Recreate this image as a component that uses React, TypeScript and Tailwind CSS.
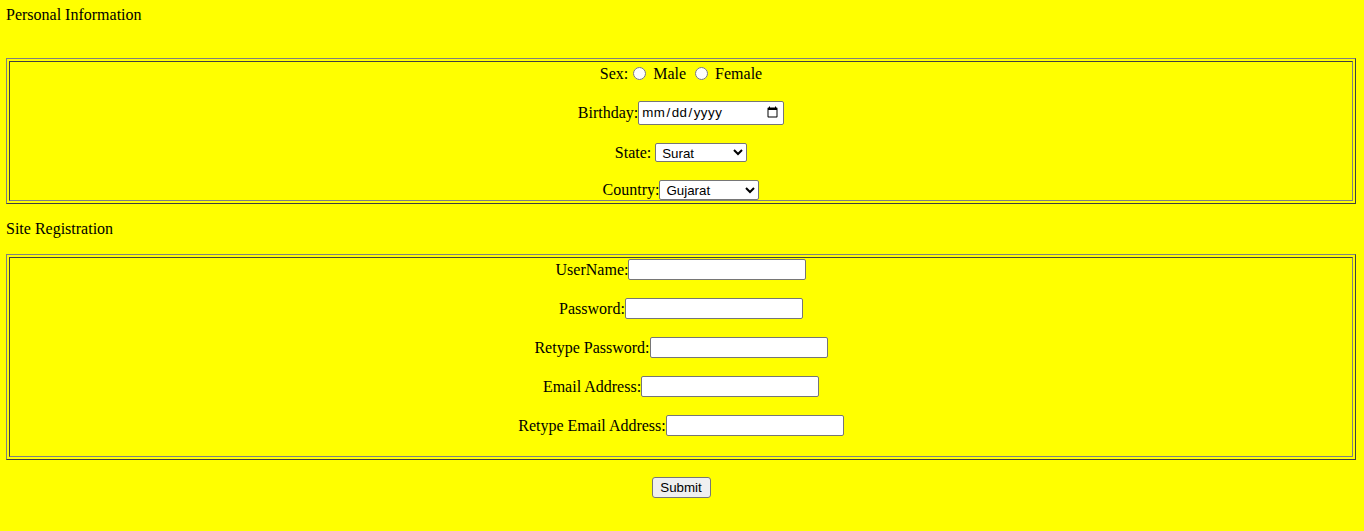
import React from 'react';

const field =
  "align-top border border-[#767676] rounded-[2px] bg-white px-[2px] py-[1px] font-['Liberation_Sans',Arial,sans-serif] text-[13.33px] text-black";

const Row: React.FC<{ h: number; mt: number; lh?: number; children: React.ReactNode }> = ({ h, mt, lh, children }) => (
  <div className="text-center whitespace-nowrap" style={{ height: h, lineHeight: `${lh ?? h}px`, marginTop: mt }}>
    {children}
  </div>
);

const Box: React.FC<{ h: number; children: React.ReactNode }> = ({ h, children }) => (
  <div className="ml-[6px] w-[1350px] border border-t-[#808080] border-l-[#808080] border-r-[#404040] border-b-[#404040] p-[2px]">
    <div
      className="border border-t-[#404040] border-l-[#404040] border-r-[#808080] border-b-[#808080]"
      style={{ height: h + 2 }}
    >
      {children}
    </div>
  </div>
);

export default function App() {
  return (
    <div className="w-full h-[531px] bg-[#ffff00] text-black font-['Liberation_Serif','Times_New_Roman',serif] text-[16px]">
      <div className="pt-[6px] pl-[6px] h-[24px] leading-[18px]">Personal Information</div>

      <div className="mt-[34px]">
        <Box h={138}>
          <Row h={22} mt={0} lh={24}>
            Sex:
            <input type="radio" name="sex" className="align-middle ml-[5px] mr-[3px] -mt-[3px]" /> Male{' '}
            <input type="radio" name="sex" className="align-middle ml-[5px] mr-[3px] -mt-[3px]" /> Female
          </Row>
          <Row h={24} mt={17}>
            Birthday:
            <input type="date" className={`${field} w-[146px] h-[24px] tracking-[0.5px]`} />
          </Row>
          <Row h={19} mt={18}>
            State:{' '}
            <select className={`${field} w-[92px] h-[19px] py-0`} defaultValue="Surat">
              <option>Surat</option>
              <option>Ahmedabad</option>
            </select>
          </Row>
          <Row h={20} mt={18}>
            Country:
            <select className={`${field} w-[100px] h-[20px] py-0`} defaultValue="Gujarat">
              <option>Gujarat</option>
              <option>India</option>
            </select>
          </Row>
        </Box>
      </div>

      <div className="mt-[16px] pl-[6px] h-[18px] leading-[18px]">Site Registration</div>

      <div className="mt-[16px]">
        <Box h={198}>
          {['UserName:', 'Password:', 'Retype Password:', 'Email Address:', 'Retype Email Address:'].map(
            (label, i) => (
              <Row key={label} h={21} mt={i === 0 ? 1 : 18}>
                {label}
                <input
                  type={label.includes('Password') ? 'password' : 'text'}
                  className={`${field} w-[178px] h-[21px]`}
                />
              </Row>
            )
          )}
        </Box>
      </div>

      <div className="mt-[17px] flex justify-center">
        <button
          type="submit"
          className="-ml-[2px] w-[59px] h-[21px] bg-[#efefef] border border-[#767676] rounded-[3px] font-['Liberation_Sans',Arial,sans-serif] text-[13.33px] leading-none"
        >
          Submit
        </button>
      </div>
    </div>
  );
}
